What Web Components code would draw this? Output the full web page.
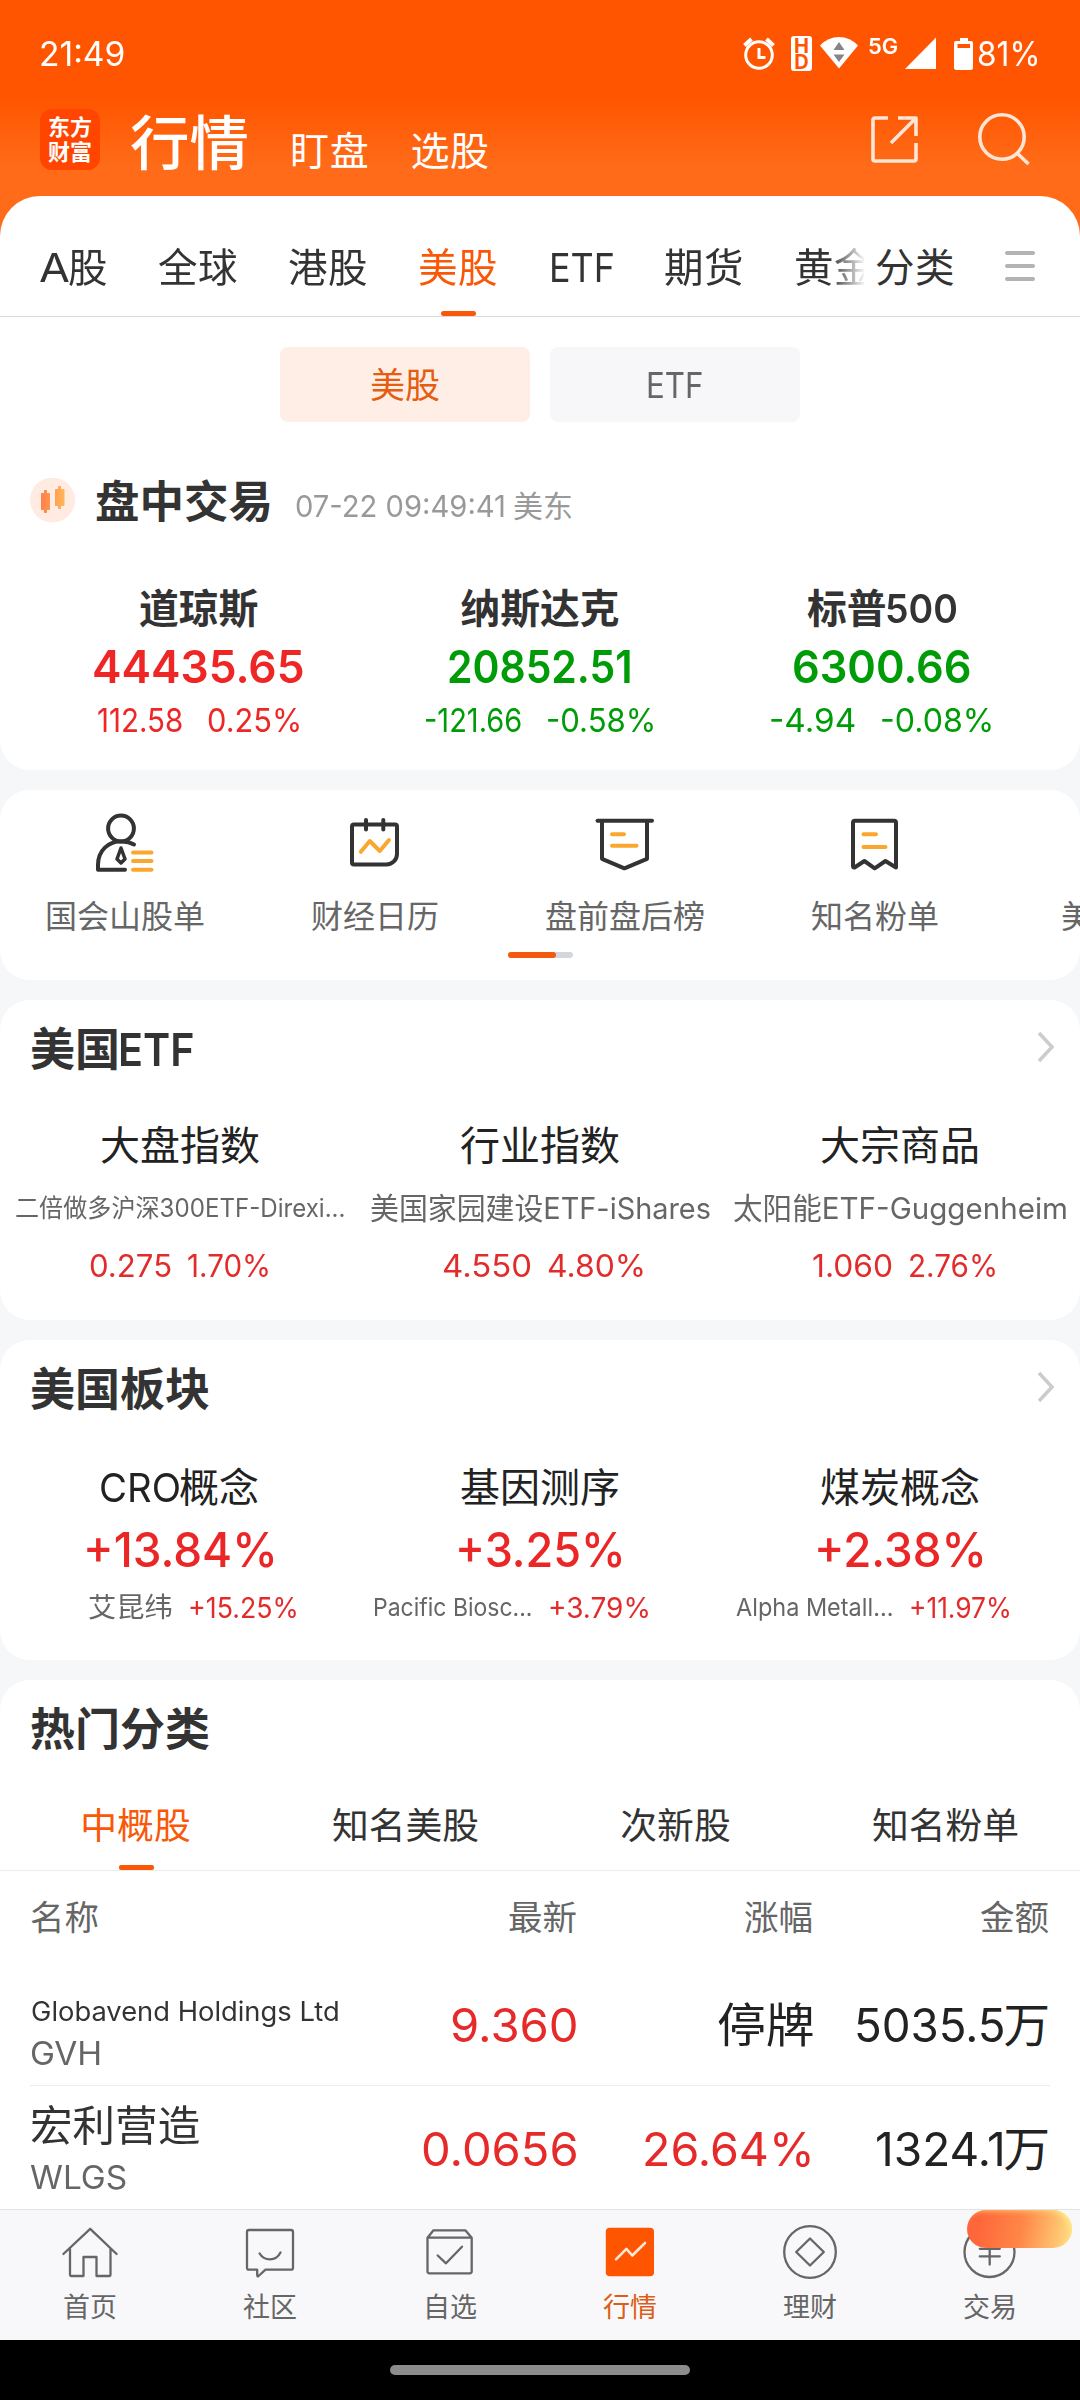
<!DOCTYPE html>
<html lang="zh-CN">
<head>
<meta charset="utf-8">
<title>行情</title>
<style>
html,body{margin:0;padding:0}
body{width:1080px;height:2400px;overflow:hidden;background:#f6f7f9;color:#2b2b2b;
font-family:Inter,"Noto Sans CJK SC","Noto Sans",sans-serif;-webkit-font-smoothing:antialiased}
</style>
</head>
<body>
<market-app></market-app>
<script>
const define = (name, html, init) => customElements.define(name, class extends HTMLElement {
  connectedCallback() {
    if (this.shadowRoot) return;
    const root = this.attachShadow({ mode: 'open' });
    root.innerHTML = typeof html === 'function' ? html(this) : html;
    if (init) init(this, root);
  }
});

define('market-app', `
<style>
:host{display:flex;flex-direction:column;width:1080px;height:2400px;overflow:hidden;
background:linear-gradient(#ff5500 0,#ff5500 98px,#ff6b18 165px,#ff6b18 240px,#f6f7f9 240px)}
main{display:flex;flex-direction:column;gap:20px;height:2013px;overflow:hidden}
</style>
<status-bar></status-bar>
<app-header></app-header>
<main>
<overview-card></overview-card>
<quick-card></quick-card>
<etf-card></etf-card>
<board-card></board-card>
<hot-card></hot-card>
</main>
<bottom-nav></bottom-nav>
<gesture-bar></gesture-bar>`);

define('status-bar', `
<style>
:host{display:flex;height:108px;box-sizing:border-box;padding:0 41px 0 41px;color:#fff;font-size:34px;line-height:107px;align-items:flex-start}
.sp{flex:1}
svg{display:block;margin-top:30px}
.hd{display:flex;flex-direction:column;width:21px;height:35px;margin:36px 8px 0 9px;border-radius:3px;background:#fff;color:#ff5500;
font-size:20px;font-weight:700;line-height:16px;text-align:center;padding-top:2px;box-sizing:border-box}
.g{font-size:22px;font-weight:600;line-height:93px;margin:0 8px 0 11px}
.b{margin-right:6px}
</style>
<fit-text w="83">21:49</fit-text><span class="sp"></span>
<svg width="40" height="48" viewBox="0 0 40 48" fill="none" stroke="#fff"><circle cx="17" cy="25" r="13.300" stroke-width="3"/><path d="M17 18v9.500h6.500" stroke-width="3"/><path d="M2.500 15.500l7-6.500M31.500 15.500l-7-6.500" stroke-width="4"/></svg>
<span class="hd"><span>H</span><span>D</span></span>
<svg width="38" height="48" viewBox="0 0 38 48"><path d="M0 15.500Q8 7 19 7T38 15.500L19 38.500Z" fill="#fff"/><path d="M13.500 20L19 12l5.500 8zM13.500 24.500L19 32l5.500-7.500z" fill="#858585"/></svg>
<fit-text class="g" w="28">5G</fit-text>
<svg width="49" height="48" viewBox="0 0 49 48"><path d="M0 39L31 7.500V39Z" fill="#fff"/></svg>
<svg class="b" width="19" height="48" viewBox="0 0 19 48"><path fill-rule="evenodd" d="M6 8h8v3h3a2 2 0 0 1 2 2v24.500a2.500 2.500 0 0 1-2.500 2.500h-14A2.500 2.500 0 0 1 0 37.500V13a2 2 0 0 1 2-2h4zM3.500 14v4h12.500v-4z" fill="#fff"/></svg>
<fit-text w="60">81%</fit-text>`);

define('app-header', `
<style>
:host{display:flex;height:88px;box-sizing:border-box;padding:0 50px 0 40px;color:#fff}
.logo{width:60px;height:61px;border-radius:12px;background:#ff4500;margin-top:1px;font-size:22px;line-height:24.500px;font-weight:700;
display:flex;flex-direction:column;align-items:center;justify-content:center}
.t{font-size:59.500px;line-height:70px;margin-left:30px;font-weight:500}
.s{font-size:39px;line-height:86px;margin-left:41px;letter-spacing:.7px}
.sp{flex:1}
svg{display:block}
</style>
<div class="logo"><span>东方</span><span>财富</span></div>
<span class="t">行情</span><span class="s">盯盘</span><span class="s">选股</span><span class="sp"></span>
<svg width="160" height="60" viewBox="870 108 160 60" fill="none" stroke="#ffe5d6" stroke-width="3.600" stroke-linejoin="round"><path d="M888 118H875a2 2 0 0 0-2 2v39a2 2 0 0 0 2 2h39a2 2 0 0 0 2-2V143M898 118h18v18M916 118L891 143"/><circle cx="1002" cy="137" r="22.200"/><path d="M1017 153l11.500 11"/></svg>`);

define('tab-strip', `
<style>
:host{display:flex;height:120px;border-bottom:1px solid #dcdcdc;box-sizing:content-box;font-size:39.500px;line-height:97px;color:#333;padding:0 45px 0 36px}
.list{display:flex;gap:50px;width:828px;padding-left:4px;overflow:hidden;white-space:nowrap;padding-top:24px;box-sizing:border-box;flex:none;-webkit-mask:linear-gradient(90deg,#000 794px,transparent 830px);mask:linear-gradient(90deg,#000 794px,transparent 830px)}
.list>*{flex:none;position:relative}
span{letter-spacing:.5px}
.a{width:67px;padding-left:1px}
.e{padding:0 1px 0 3px}
.on{color:#fa5807}
.on i{position:absolute;left:23px;bottom:0;width:35px;height:5px;border-radius:2.500px;background:#fa5807}
.more{margin-left:11px;margin-top:24px;flex:1}
.menu{display:flex;flex-direction:column;gap:9px;margin-top:55px}
.menu i{width:30px;height:4px;border-radius:2px;background:#b3b3b3}
</style>
<div class="list"><span class="a"><fit-text w="27">A</fit-text>股</span><span>全球</span><span>港股</span><span class="on">美股<i></i></span><span class="e"><fit-text w="62">ETF</fit-text></span><span>期货</span><span>黄金</span></div>
<span class="more">分类</span><div class="menu"><i></i><i></i><i></i></div>`);

define('overview-card', `
<style>
:host{display:block;height:574px;background:#fff;border-radius:40px 40px 30px 30px;flex:none}
.seg{display:flex;justify-content:center;gap:20px;margin-top:30px;font-size:35px;line-height:77px;text-align:center}
.seg>div{width:250px;height:75px;border-radius:8px;background:#f7f7fa;color:#666}
.seg>.on{background:#ffeee6;color:#e55d10}
.head{display:flex;align-items:center;height:158px;padding-left:30px;line-height:158px;color:#333}
.head b{font-size:44.500px;font-weight:700;margin:2px 23px 0 20px}
.head span{font-size:30px;color:#999;padding-top:9px;display:flex;gap:9px}
.cols{display:flex;padding:0 28px}
</style>
<tab-strip></tab-strip>
<div class="seg"><div class="on">美股</div><div><fit-text w="54">ETF</fit-text></div></div>
<div class="head">
<svg width="45" height="46" viewBox="0 0 45 46"><defs><linearGradient id="a" x1="0" x2="1"><stop stop-color="#ff8247"/><stop offset="1" stop-color="#ffb55a"/></linearGradient></defs><circle cx="22.500" cy="22" r="22.500" fill="#ffebe1"/><path d="M14.500 12.500h2v3h3v16h-3v3h-2v-3h-3v-16h3zM28.500 8.500h2v3h3.500v16h-3.500v3h-2v-3h-3v-16h3z" fill="url(#a)" stroke="url(#a)" stroke-linejoin="round"/></svg>
<b>盘中交易</b><span><fit-text w="208">07-22 09:49:41</fit-text>美东</span></div>
<div class="cols">
<index-quote name="道琼斯" v="44435.65" vw="208" d="112.58" dw="83" p="0.25%" pw="92" c="#ef2626"></index-quote>
<index-quote name="纳斯达克" v="20852.51" vw="181" d="-121.66" dw="95" p="-0.58%" pw="107" c="#009c08"></index-quote>
<index-quote name="标普500" v="6300.66" vw="175" d="-4.94" dw="84" p="-0.08%" pw="111" c="#009c08"></index-quote>
</div>`);

define('index-quote', el => { const a = n => el.getAttribute(n); return `
<style>
:host{display:flex;flex-direction:column;align-items:center;flex:1;color:${a('c')}}
.n{font-size:39.800px;line-height:58px;margin-bottom:-2px;font-weight:700;color:#333}
.n small{font-size:39px;font-weight:600}
.v{font-size:45.500px;line-height:62px;font-weight:600}
.r{display:flex;gap:27px;padding-left:1px;font-size:33px;line-height:44px}
</style>
<span class="n">${a('name').replace('500', '<small><fit-text w="69">500</fit-text></small>')}</span><fit-text class="v" w="${a('vw')}">${a('v')}</fit-text>
<div class="r"><fit-text w="${a('dw')}">${a('d')}</fit-text><fit-text w="${a('pw')}">${a('p')}</fit-text></div>`; });

define('quick-card', `
<style>
:host{display:block;height:190px;background:#fff;border-radius:30px;overflow:hidden;flex:none}
.row{display:flex;height:162px;padding-top:20px;box-sizing:border-box;width:1250px}
.row>div{width:250px;display:flex;flex-direction:column;align-items:center;font-size:32px;line-height:74px;color:#666}
.row>.next{align-items:flex-start;padding-left:61px;padding-top:70px;box-sizing:border-box}
svg{display:block;fill:none;stroke:#333;stroke-width:4;stroke-linecap:round;stroke-linejoin:round;flex:none}
.o{stroke:#fba62f}
.bar{width:65px;height:6px;border-radius:3px;background:#d3d6dc;margin:0 auto}
.bar i{display:block;width:48px;height:6px;border-radius:3px;background:#f45a0e}
</style>
<div class="row">
<div><svg width="70" height="70"><circle cx="31" cy="18.500" r="12.900"/><path d="M35 59.700H8V55C8 40 19 31.500 30 31.500Q38 31 44 34.500"/><path d="M31 38l4 11-4 4-4-4z" stroke-width="3.500"/><path class="o" d="M43 42.500h18.500M43 51h18.500M43 59.700h18.500"/></svg>国会山股单</div>
<div><svg width="70" height="70"><path d="M14 14.500H55a2 2 0 0 1 2 2V44a10.500 10.500 0 0 1-10.500 10.500H14a2 2 0 0 1-2-2V16.500a2 2 0 0 1 2-2ZM26 10v9.500M43.300 10v9.500"/><path class="o" d="M20.800 41.800L29.800 31l10 10L49 30"/></svg>财经日历</div>
<div><svg width="70" height="70"><path d="M7.500 10.700H62M12 11V48.800L34.400 58.300 57 48.800V11"/><path class="o" d="M22 24.300H34M22 35.700H46.500"/></svg>盘前盘后榜</div>
<div><svg width="70" height="70"><path d="M15 10.700H54a2 2 0 0 1 2 2V57.500L45.400 51 34.700 58.300 24.400 51 14.500 57.500Q13 58 13 56V12.700a2 2 0 0 1 2-2Z"/><path class="o" d="M23.500 24.300H36M23.500 37H45.500"/></svg>知名粉单</div>
<div class="next">美</div>
</div>
<div class="bar"><i></i></div>`);

define('card-title', el => `
<style>
:host{display:flex;height:100px;line-height:102px;padding:0 26px 0 30px;font-size:45px;font-weight:700;color:#333;justify-content:space-between;align-items:center}
svg{display:block;margin-top:-6px}
</style>
<span><slot></slot></span>${el.hasAttribute('link') ? '<svg width="18" height="32" fill="none" stroke="#ccc" stroke-width="3.500"><path d="M3 2L16 16 3 30"/></svg>' : ''}`);

define('etf-item', el => { const a = n => el.getAttribute(n); return `
<style>
:host{display:flex;flex-direction:column;align-items:center;width:360px}
.n{font-size:40px;line-height:92px;margin-bottom:-2px;color:#222}
.s{font-size:${a('fs')}px;line-height:37px;color:#666;white-space:nowrap}
.r{display:flex;gap:18px;padding-left:${a('off')}px;font-size:31px;line-height:78px;color:#e22c2c}
</style>
<span class="n">${a('name')}</span><fit-text class="s" w="${a('sw')}">${a('s')}</fit-text>
<div class="r"><fit-text w="${a('dw')}">${a('d')}</fit-text><fit-text w="${a('pw')}">${a('p')}</fit-text></div>`; });

define('etf-card', `
<style>:host{display:block;height:320px;background:#fff;border-radius:30px;flex:none}.c{display:flex}</style>
<card-title link>美国<fit-text w="72" style="font-weight:600">ETF</fit-text></card-title>
<div class="c">
<etf-item name="大盘指数" s="二倍做多沪深300ETF-Direxi..." sw="328" fs="25" d="0.275" dw="80" p="1.70%" pw="81" off="1"></etf-item>
<etf-item name="行业指数" s="美国家园建设ETF-iShares" sw="338" fs="29.500" d="4.550" dw="87" p="4.80%" pw="96" off="9"></etf-item>
<etf-item name="大宗商品" s="太阳能ETF-Guggenheim" sw="332" fs="29.500" d="1.060" dw="78" p="2.76%" pw="87" off="11"></etf-item>
</div>`);

define('board-item', el => { const a = n => el.getAttribute(n); return `
<style>
:host{display:flex;flex-direction:column;align-items:center;width:360px}
.n{font-size:40px;line-height:95px;margin-bottom:-1px;color:#222}
.v{font-size:48px;line-height:32px;font-weight:500;color:#eb2626}
.r{display:flex;align-self:flex-start;gap:18px;padding-left:${a('x')}px;font-size:29px;line-height:83px;color:#e22c2c}
.k{font-size:${a('fs')}px;color:#666}
</style>
<span class="n"><slot></slot></span><fit-text class="v" w="${a('vw')}">${a('v')}</fit-text>
<div class="r"><fit-text class="k" w="${a('kw')}">${a('k')}</fit-text><fit-text w="${a('pw')}">${a('p')}</fit-text></div>`; });

define('board-card', `
<style>:host{display:block;height:320px;background:#fff;border-radius:30px;flex:none}.c{display:flex}</style>
<card-title link>美国板块</card-title>
<div class="c">
<board-item v="+13.84%" vw="190" k="艾昆纬" kw="82" fs="27.500" x="89" p="+15.25%" pw="108"><fit-text w="78">CRO</fit-text>概念</board-item>
<board-item v="+3.25%" vw="166" k="Pacific Biosc..." kw="157" fs="24.500" x="14" p="+3.79%" pw="100">基因测序</board-item>
<board-item v="+2.38%" vw="168" k="Alpha Metall..." kw="155" fs="24.500" x="17" p="+11.97%" pw="100">煤炭概念</board-item>
</div>`);

define('stock-row', el => { const a = n => el.getAttribute(n); return `
<style>
:host{display:flex;margin:0 30px;height:122px;border-bottom:1px solid #ececec;font-size:46.500px;line-height:${a('vl')}px;color:#222;white-space:nowrap}
:host(:last-of-type){border-bottom-color:transparent}
.id{width:312px;display:flex;flex-direction:column;align-items:flex-start;padding:${a('top')}px 0 0 2px;box-sizing:border-box}
.nm{font-size:${a('fs')}px;line-height:${a('lh')}px;color:#333}
.cd{font-size:32px;line-height:43px;color:#666}
.x{text-align:right;color:#e62a2a}.x1{width:234px}.x2{width:236px}.x3{width:238px}
.k{color:#222}
</style>
<div class="id"><fit-text class="nm" w="${a('nw')}">${a('name')}</fit-text><fit-text class="cd" w="${a('cw')}">${a('code')}</fit-text></div>
<div class="x x1"><fit-text w="${a('pw')}">${a('p')}</fit-text></div>
<div class="x x2 ${a('halt') !== null ? 'k' : ''}"><fit-text w="${a('rw')}">${a('r')}</fit-text></div>
<div class="x x3 k"><fit-text w="${a('aw')}">${a('amt')}</fit-text>万</div>`; });

define('hot-card', `
<style>
:host{display:block;height:529px;background:#fff;border-radius:30px 30px 0 0;flex:none}
.tabs{display:flex;height:90px;border-bottom:1px solid #ececec;font-size:36.800px;line-height:91px;color:#333}
.tabs div{width:270px;text-align:center;position:relative;left:.5px}
.tabs .on{color:#fa5807}
.tabs i{position:absolute;left:118px;bottom:0;width:35px;height:5px;border-radius:2px;background:#fa5807}
.th{display:flex;height:92px;margin:0 30px;font-size:34.500px;line-height:93px;color:#666;text-align:right}
.th :nth-child(1){width:312px;text-align:left}.th :nth-child(2){width:235px}.th :nth-child(3){width:236px}.th :nth-child(4){width:236px}
</style>
<card-title>热门分类</card-title>
<div class="tabs"><div class="on">中概股<i></i></div><div>知名美股</div><div>次新股</div><div>知名粉单</div></div>
<div class="th"><span>名称</span><span>最新</span><span>涨幅</span><span>金额</span></div>
<stock-row vl="125" name="Globavend Holdings Ltd" nw="306" fs="26.500" lh="42" top="27" code="GVH" cw="69" p="9.360" pw="124" halt r="停牌" rw="93" amt="5035.5" aw="147"></stock-row>
<stock-row vl="127" name="宏利营造" nw="166" fs="42" lh="60" top="10" code="WLGS" cw="94" p="0.0656" pw="153" r="26.64%" rw="168" amt="1324.1" aw="126"></stock-row>`);

define('bottom-nav', `
<style>
:host{display:flex;height:131px;border-top:1px solid #e2e2e2;background:#f8f8fa;flex:none;box-sizing:border-box;position:relative}
div{width:180px;display:flex;flex-direction:column;align-items:center;padding-top:14px;font-size:27px;line-height:48px;color:#666}
svg{display:block;fill:none;stroke:#666;stroke-width:2.300;stroke-linejoin:round;stroke-linecap:round;flex:none}
.on{color:#dc5d17}
.badge{position:absolute;left:967px;top:0;width:105px;height:38px;border-radius:19px;background:linear-gradient(100deg,#ff663a 12%,#ff8748 52%,#ffd078 92%);box-shadow:inset -5px 3px 6px -3px rgba(255,240,140,.85)}
</style>
<div><svg width="60" height="60"><path d="M3.400 30L30.200 4.800 56.600 30M10 25V51a1 1 0 0 0 1 1H23.500V33H36.500V52H49.500a1 1 0 0 0 1-1V25"/></svg>首页</div>
<div><svg width="60" height="60"><path d="M9 6H51a2 2 0 0 1 2 2V43.700a2 2 0 0 1-2 2H25.500L18 52.500Q17.200 52.500 17.200 51V45.700H9a2 2 0 0 1-2-2V8a2 2 0 0 1 2-2ZM19.600 29.500Q23 35.300 30 35.300T40.500 28.500"/></svg>社区</div>
<div><svg width="60" height="60"><path d="M7.500 13.700H51.700V47.300a2 2 0 0 1-2 2H9.500a2 2 0 0 1-2-2V13.700L13.500 6.300H45.300L51.700 13.700M17.700 31.500L26 39.300 42 22.700"/></svg>自选</div>
<div class="on"><svg width="60" height="60"><rect x="5.800" y="3.700" width="48.200" height="48.500" rx="4" fill="#ff5500" stroke="none"/><path d="M16 35.300L26.400 24.900 32.300 31.500 45 19" stroke="#ffe8dc" stroke-width="2.600"/></svg>行情</div>
<div><svg width="60" height="60"><circle cx="30" cy="28" r="25.800"/><path d="M30 14.500L43.800 28 30 41.500 16.200 28Z"/></svg>理财</div>
<div><svg width="60" height="60"><circle cx="29.500" cy="28" r="25"/><path d="M20.500 14L29.700 24.500 39 14M19.800 24.800H39.800M19.800 32.400H39.800M29.700 24.800V40.500"/></svg>交易</div>
<span class="badge"></span>`);

define('gesture-bar', `
<style>
:host{display:flex;height:60px;background:#000;justify-content:center;padding-top:25px;box-sizing:border-box;flex:none}
i{width:300px;height:10px;border-radius:5px;background:#8c8c8c}
</style><i></i>`);

/* Sets a run of text to an exact inked width, whatever the font's own advances are. */
define('fit-text', `
<style>
:host{display:inline-block;white-space:nowrap;text-align:left;vertical-align:baseline}
span{display:inline-block;transform-origin:0 50%;letter-spacing:0}
</style><span><slot></slot></span>`, (el, root) => {
  const s = root.querySelector('span');
  const fs = parseFloat(getComputedStyle(el).fontSize);
  const w = +el.getAttribute('w') + fs * 0.1;
  const natural = s.getBoundingClientRect().width;
  el.style.width = w + 'px';
  el.style.flex = 'none';
  const cs = getComputedStyle(el);
  el.style.marginLeft = parseFloat(cs.marginLeft) - fs * 0.05 + 'px';
  el.style.marginRight = parseFloat(cs.marginRight) - fs * 0.05 + 'px';
  s.style.transform = `scaleX(${w / natural})`;
});
</script>
</body>
</html>
